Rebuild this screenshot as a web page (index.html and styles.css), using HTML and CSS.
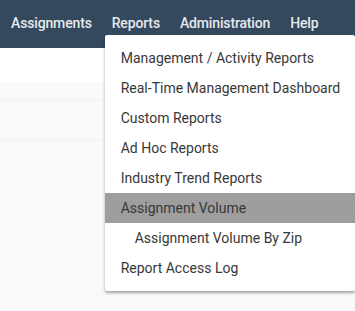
FILE: index.html
```html
<!DOCTYPE html>
<html lang="en">
<head>
    <meta charset="UTF-8">
    <meta name="viewport" content="width=device-width, initial-scale=1.0">
    <title>Reports</title>
    <link rel="stylesheet" href="styles.css">
</head>
<body>
    <div class="top-nav">
        <ul class="nav-menu">
            <li class="nav-item">Assignments</li>
            <li class="nav-item open">
                Reports
                <ul class="dropdown">
                    <li class="dropdown-item">Management / Activity Reports</li>
                    <li class="dropdown-item">Real-Time Management Dashboard</li>
                    <li class="dropdown-item">Custom Reports</li>
                    <li class="dropdown-item">Ad Hoc Reports</li>
                    <li class="dropdown-item">Industry Trend Reports</li>
                    <li class="dropdown-item hover">Assignment Volume</li>
                    <li class="dropdown-item sub">Assignment Volume By Zip</li>
                    <li class="dropdown-item">Report Access Log</li>
                </ul>
            </li>
            <li class="nav-item">Administration</li>
            <li class="nav-item">Help</li>
        </ul>
    </div>
    <div class="sub-bar"></div>
    <div class="content">
        <div class="panel">
            <div class="panel-head"></div>
            <div class="panel-row"></div>
        </div>
    </div>
</body>
</html>
```

FILE: styles.css
```css
html, body {
    margin: 0;
    padding: 0;
    height: 100%;
}
body {
    font-family: Roboto, "Liberation Sans", sans-serif;
    font-size: 14px;
    background-color: #f9f9f9;
}
.top-nav {
    background-color: #34495e;
    height: 48px;
}
.nav-menu {
    list-style: none;
    margin: 0;
    padding: 0 0 0 1px;
    display: flex;
    height: 100%;
}
.nav-item {
    position: relative;
    padding: 0 10px;
    line-height: 46px;
    color: #e6eaed;
    font-weight: 500;
    font-size: 14px;
    letter-spacing: -0.15px;
}
.dropdown {
    position: absolute;
    top: 35px;
    left: 3px;
    width: 250px;
    list-style: none;
    margin: 0;
    padding: 8px 0;
    background-color: #fff;
    border-radius: 2px;
    box-shadow: 0 2px 3px rgba(0, 0, 0, 0.35);
    letter-spacing: 0;
    z-index: 10;
}
.dropdown-item {
    height: 30px;
    line-height: 30px;
    padding: 0 16px;
    color: #383838;
    font-weight: 400;
    font-size: 14px;
    white-space: nowrap;
}
.dropdown-item.hover {
    background-color: #9e9e9e;
}
.dropdown-item.sub {
    padding-left: 30px;
}
.sub-bar {
    height: 34px;
    background-color: #fff;
}
.content {
    padding: 18px 0 0 0;
}
.panel {
    border-top: 1px solid #f1f1f1;
}
.panel-head {
    height: 38px;
    border-bottom: 1px solid #f1f1f1;
}
.panel-row {
    height: 38px;
}
```
